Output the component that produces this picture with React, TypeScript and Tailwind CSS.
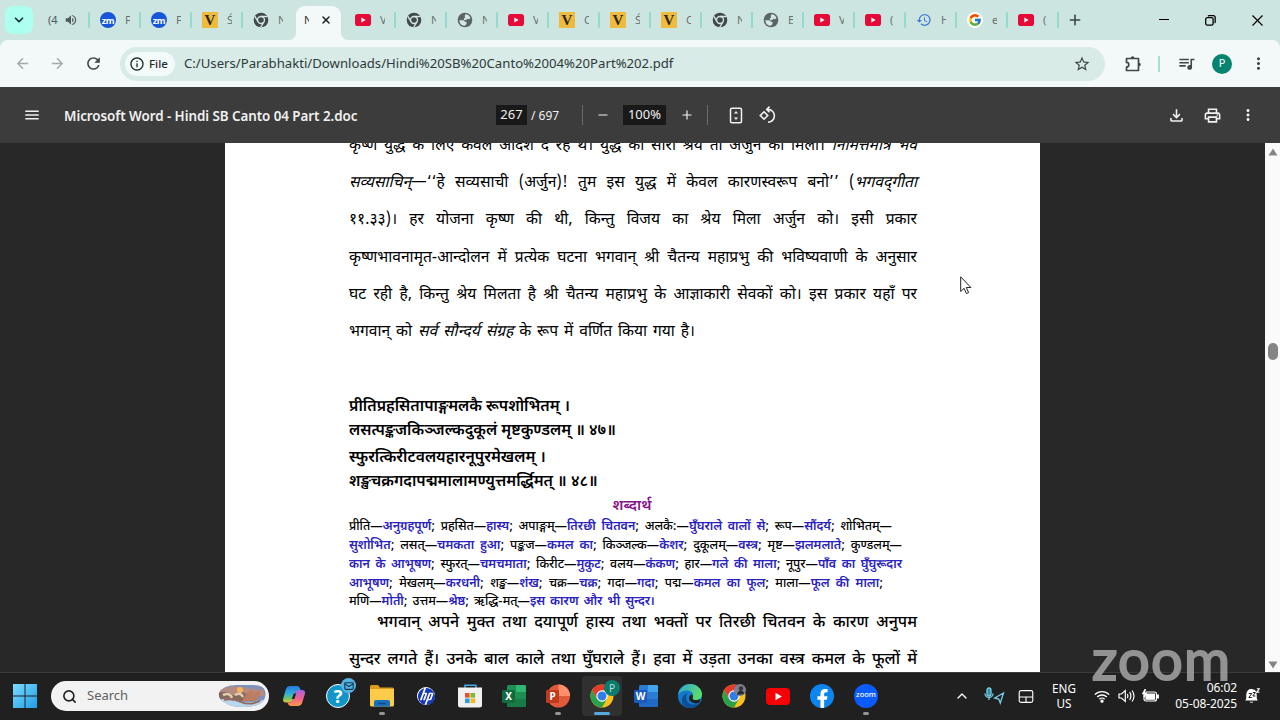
import type { ReactNode } from 'react'
import {
  MdArrowBack,
  MdArrowForward,
  MdRefresh,
  MdStarBorder,
  MdMoreVert,
  MdHistory,
  MdMenu,
  MdOutlinePrint,
  MdOutlineFileDownload,
  MdOutlineInfo,
  MdVolumeUp,
  MdQueueMusic,
} from 'react-icons/md'
import { FcGoogle } from 'react-icons/fc'
import { SiHp } from 'react-icons/si'
import { FaFacebookF } from 'react-icons/fa'
import { ChevronDown, ChevronUp, X, Minus, Plus, Search, Mail } from 'lucide-react'

/* ---------- small logos ---------- */

function YouTube({ className = 'w-4 h-3', fill = '#e60a38' }: { className?: string; fill?: string }) {
  return (
    <svg viewBox="0 0 24 17" className={className} preserveAspectRatio="none">
      <rect width="24" height="17" rx="4" fill={fill} />
      <path d="M9.5 4.8v7.4l6.4-3.7z" fill="#fff" />
    </svg>
  )
}

function ChromeMono() {
  return (
    <svg viewBox="0 0 24 24" className="h-4 w-4">
      <circle cx="12" cy="12" r="11" fill="#42494a" />
      <circle cx="12" cy="12" r="5.2" fill="#42494a" stroke="#d3e7e4" strokeWidth="2" />
      <path d="M12 6.8h10M7.5 14.6 2.6 6.2M16.5 14.6l-4.8 8.2" stroke="#d3e7e4" strokeWidth="2" />
    </svg>
  )
}

function Globe() {
  return (
    <svg viewBox="0 0 16 16" className="h-4 w-4">
      <circle cx="8" cy="8" r="7.3" fill="#5a6465" />
      <path d="M8.500 2.300q3.500.2 5 3.700l-1.500 1.200-2-.4-.8 1.500H7.500L6.600 6.800l1.600-1.300-.6-1.500z" fill="#d3e7e4" />
      <path d="M2.200 8.200h4.300l1.500 1.600 1.500.3v1.800l-1.600 1.900q-4.800 0-5.700-5.600z" fill="#d3e7e4" />
    </svg>
  )
}

function ChromeColor({ className = 'h-6 w-6' }: { className?: string }) {
  return (
    <svg viewBox="0 0 48 48" className={className}>
      <circle cx="24" cy="24" r="23" fill="#fbc116" />
      <path d="M4.1 12.5A23 23 0 0 1 43.9 12.5H24L14 29.7z" fill="#e33b2e" />
      <path d="M4.1 12.5A23 23 0 0 0 24 47L34 29.7 24 35.5l-10-5.8z" fill="#2aa14c" />
      <circle cx="24" cy="24" r="11.4" fill="#fff" />
      <circle cx="24" cy="24" r="9" fill="#2f7de8" />
    </svg>
  )
}

function ZoomFav() {
  return (
    <span className="flex h-4 w-4 items-center justify-center rounded-full bg-[#1656d8] text-[9px] leading-none font-bold tracking-tighter text-white">
      zm
    </span>
  )
}

function Veda() {
  return (
    <span className="flex h-4 w-4 items-center justify-center bg-[#eebb3c] font-['Liberation_Serif',serif] text-[15px] leading-none font-bold text-[#2c2414]">
      V
    </span>
  )
}

type Fav = 'zm' | 'v' | 'chrome' | 'yt' | 'globe' | 'history' | 'google'

const favicons: Record<Fav, ReactNode> = {
  zm: <ZoomFav />,
  v: <Veda />,
  chrome: <ChromeMono />,
  yt: <YouTube />,
  globe: <Globe />,
  history: <MdHistory className="h-4 w-4 text-[#3a7bd5]" />,
  google: (
    <span className="flex h-4 w-4 items-center justify-center rounded-full bg-white">
      <FcGoogle className="h-3.5 w-3.5" />
    </span>
  ),
}

const leftTabs: { icon: Fav; label: string }[] = [
  { icon: 'zm', label: 'F' },
  { icon: 'zm', label: 'F' },
  { icon: 'v', label: 'Ś' },
  { icon: 'chrome', label: 'N' },
]

const rightTabs: { icon: Fav; label: string }[] = [
  { icon: 'yt', label: 'V' },
  { icon: 'chrome', label: 'N' },
  { icon: 'globe', label: 'N' },
  { icon: 'yt', label: 'V' },
  { icon: 'v', label: 'C' },
  { icon: 'v', label: 'Ś' },
  { icon: 'v', label: 'C' },
  { icon: 'chrome', label: 'N' },
  { icon: 'globe', label: 'E' },
  { icon: 'yt', label: 'V' },
  { icon: 'yt', label: '(' },
  { icon: 'history', label: 'H' },
  { icon: 'google', label: 'e' },
  { icon: 'yt', label: '(' },
]

function Tab({ icon, label, last }: { icon: Fav; label: string; last?: boolean }) {
  return (
    <div className="flex h-4 w-[51px] shrink-0 items-center pl-[11px]">
      <span className="flex w-4 justify-center">{favicons[icon]}</span>
      <span className="ml-[9px] w-[5px] overflow-hidden text-[11px] leading-4 text-[#647272]">{label}</span>
      {!last && <span className="ml-auto h-4 w-0.5 translate-x-px rounded bg-[#92dacb]" />}
    </div>
  )
}

function TabStrip() {
  return (
    <div className="flex h-10 items-center bg-[#cde5e1]">
      <button className="ml-[5px] flex h-7 w-7 items-center justify-center rounded-lg bg-[#adfff0] text-[#163334]">
        <ChevronDown className="h-3.5 w-3.5" strokeWidth={3} />
      </button>
      <div className="ml-[5px] flex h-4 w-[51px] shrink-0 items-center pl-2.5 text-[#4c5a5a]">
        <span className="w-[10px] overflow-hidden text-[11px] leading-4">(4</span>
        <MdVolumeUp className="ml-1.5 h-3.5 w-3.5" />
        <span className="ml-auto h-4 w-0.5 translate-x-px rounded bg-[#92dacb]" />
      </div>
      {leftTabs.map((tab, i) => (
        <Tab key={i} {...tab} last={i === leftTabs.length - 1} />
      ))}
      <div className="flex h-10 w-[51px] shrink-0 items-end">
        <svg viewBox="0 0 6 6" className="-ml-1 h-[7px] w-[7px] shrink-0">
          <path d="M6 0v6H0a6 6 0 0 0 6-6" fill="#f3f8f8" />
        </svg>
        <div className="flex h-[34px] w-[45px] shrink-0 items-center rounded-t-[9px] bg-[#f3f8f8] pb-1.5 pl-2">
          <span className="w-[5px] overflow-hidden text-[11px] text-[#2c3535]">N</span>
          <X className="ml-[11px] h-3 w-3 text-[#1c2525]" strokeWidth={3} />
        </div>
        <svg viewBox="0 0 6 6" className="h-[7px] w-[7px] shrink-0">
          <path d="M0 0v6h6a6 6 0 0 1-6-6" fill="#f3f8f8" />
        </svg>
      </div>
      {rightTabs.map((tab, i) => (
        <Tab key={i} {...tab} />
      ))}
      <Plus className="ml-[9px] h-4 w-4 shrink-0 text-[#3a4545]" strokeWidth={2.4} />
      <div className="ml-auto flex items-center pr-[17px] text-black">
        <svg viewBox="0 0 10 10" className="h-2.5 w-2.5" stroke="currentColor">
          <path d="M0 4.5h10" />
        </svg>
        <svg viewBox="0 0 11 11" className="ml-9 h-[11px] w-[11px]" fill="none" stroke="currentColor" strokeWidth="1.3">
          <rect x=".7" y="2.7" width="7.4" height="7.4" rx="1.6" />
          <path d="M3 1.2A1.5 1.5 0 0 1 4 .7h4.2a2 2 0 0 1 2 2v4.1q0 .8-.6 1.2" />
        </svg>
        <svg viewBox="0 0 11 11" className="ml-9 h-[11px] w-[11px]" stroke="currentColor" strokeWidth="1.2">
          <path d="m.5.5 10 10m0-10-10 10" />
        </svg>
      </div>
    </div>
  )
}

function AddressBar() {
  return (
    <div className="bg-[#cde5e1]">
      <div className="flex h-[47px] items-center rounded-t-lg bg-[#f3f8f8] text-[#3f4848]">
        <MdArrowBack className="ml-3.5 h-[17px] w-[17px] text-[#a3aaab]" />
        <MdArrowForward className="ml-[18px] h-[17px] w-[17px] text-[#a3aaab]" />
        <MdRefresh className="ml-[18px] h-[19px] w-[19px]" />
        <div className="ml-[17px] flex h-[34px] w-[985px] items-center rounded-full bg-[#d8ebe7] pr-3.5 pl-[5px]">
          <span className="flex h-6 w-[50px] items-center rounded-full bg-[#f3fbfa] pl-1 text-[11.5px] font-medium text-[#1f2a2a]">
            <MdOutlineInfo className="h-4 w-4 rotate-180 -scale-y-100" />
            <span className="ml-1">File</span>
          </span>
          <span className="ml-[9px] text-[13.17px] whitespace-nowrap text-[#2f3a3a]">
            C:/Users/Parabhakti/Downloads/Hindi%20SB%20Canto%2004%20Part%202.pdf
          </span>
          <MdStarBorder className="ml-auto h-[18px] w-[18px]" />
        </div>
        <svg viewBox="0 0 18 18" className="ml-[19px] h-[18px] w-[18px]" fill="none" stroke="currentColor" strokeWidth="1.7">
          <path d="M2.5 3.5h12v12h-12V12a2.3 2.3 0 0 0 0-4.6z" strokeLinejoin="round" />
          <path d="M6.8 3a1.8 1.8 0 0 1 3.6 0zM15 7.700a1.800 1.800 0 0 1 0 3.600z" fill="currentColor" stroke="none" />
        </svg>
        <span className="ml-4 h-4 w-0.5 bg-[#a8dfd4]" />
        <MdQueueMusic className="ml-[17px] h-[19px] w-[19px]" />
        <span className="ml-4 flex h-5 w-5 items-center justify-center rounded-full bg-[#07846f] text-[11px] text-white">
          P
        </span>
        <MdMoreVert className="ml-[17px] h-[19px] w-[19px]" />
      </div>
    </div>
  )
}

function PdfToolbar() {
  return (
    <div className="flex h-14 items-center bg-[#3c3c3c] text-[#f1f1f1]">
      <MdMenu className="ml-[23px] h-[18px] w-[18px]" />
      <span className="ml-[23px] w-[432px] pt-0.5 text-[13.4px] font-semibold tracking-[-0.05px] whitespace-nowrap">
        Microsoft Word - Hindi SB Canto 04 Part 2.doc
      </span>
      <div className="flex items-center text-[13px]">
        <span className="flex h-5 w-[31px] items-center justify-center bg-[#191919]">267</span>
        <span className="ml-1 w-[31px] pt-px text-xs whitespace-nowrap">/ 697</span>
        <span className="ml-5 h-5 w-px bg-[#6b6b6b]" />
        <Minus className="ml-[13px] h-3.5 w-3.5" />
        <span className="ml-[13px] flex h-5 w-[43px] items-center justify-center bg-[#191919]">100%</span>
        <Plus className="ml-[14px] h-3.5 w-3.5" />
        <span className="ml-[13px] h-5 w-px bg-[#6b6b6b]" />
        <svg viewBox="0 0 14 18" className="ml-[21px] h-[17px] w-[14px]" fill="none" stroke="currentColor" strokeWidth="1.6">
          <rect x="1.2" y="1.2" width="11.6" height="15.6" rx="1.4" />
          <path d="M7 4.200 9.200 7H4.800zM7 13.800 9.200 11H4.800z" fill="currentColor" stroke="none" />
        </svg>
        <svg viewBox="0 0 18 18" className="ml-4 h-[18px] w-[18px]" fill="none" stroke="currentColor" strokeWidth="1.6">
          <path d="m5 5.800 3.700 3.700L5 13.200 1.300 9.500z" />
          <path d="M9 16.200a6.400 6.400 0 1 0 0-12.800H7.700M10.500.700 7.700 3.400l2.800 2.800" />
        </svg>
      </div>
      <MdOutlineFileDownload className="ml-auto h-[19px] w-[19px]" />
      <MdOutlinePrint className="ml-[17px] h-[19px] w-[19px]" />
      <MdMoreVert className="mr-[23px] ml-[17px] h-[18px] w-[18px]" />
    </div>
  )
}

/* ---------- document ---------- */

// One printed line, stretched over the text column
function Justified({ children, width = 'w-[568px]', className = '' }: { children: ReactNode; width?: string; className?: string }) {
  return (
    <div className={`h-[37.2px] shrink-0 text-justify whitespace-nowrap [text-align-last:justify] ${width} ${className}`}>
      {children}
    </div>
  )
}

type Gloss = [word: string, meaning: string, tail?: string]

const glossary: { width: string; items: Gloss[] }[] = [
  {
    width: 'w-[543px]',
    items: [['प्रीति', 'अनुग्रहपूर्ण'], ['प्रहसित', 'हास्य'], ['अपाङ्गम्', 'तिरछी चितवन'], ['अलकै:', 'घुँघराले वालों से'], ['रूप', 'सौंदर्य'], ['शोभितम्', '', '']],
  },
  {
    width: 'w-[553px]',
    items: [['', 'सुशोभित'], ['लसत्', 'चमकता हुआ'], ['पङ्कज', 'कमल का'], ['किञ्जल्क', 'केशर'], ['दुकूलम्', 'वस्त्र'], ['मृष्ट', 'झलमलाते'], ['कुण्डलम्', '', '']],
  },
  {
    width: 'w-[553px]',
    items: [['', 'कान के आभूषण'], ['स्फुरत्', 'चमचमाता'], ['किरीट', 'मुकुट'], ['वलय', 'कंकण'], ['हार', 'गले की माला'], ['नूपुर', 'पाँव का घुँघुरूदार', '']],
  },
  {
    width: 'w-[534px]',
    items: [['', 'आभूषण'], ['मेखलम्', 'करधनी'], ['शङ्ख', 'शंख'], ['चक्र', 'चक्र'], ['गदा', 'गदा'], ['पद्म', 'कमल का फूल'], ['माला', 'फूल की माला']],
  },
  {
    width: 'w-[306px]',
    items: [['मणि', 'मोती'], ['उत्तम', 'श्रेष्ठ'], ['ऋद्धि-मत्', 'इस कारण और भी सुन्दर।', '']],
  },
]

function Page() {
  return (
    <div className="w-[815px] overflow-hidden bg-white pl-[124px] font-['Noto_Sans_Devanagari','Noto_Sans','Lohit_Devanagari',sans-serif] text-black">
      <div className="-mt-[15px] flex flex-col text-[15.6px] leading-[37.2px]">
        <Justified>
          कृष्ण युद्ध के लिए केवल आदेश दे रहे थे। युद्ध का सारा श्रेय तो अर्जुन को मिला। <i>निमित्तमात्रं भव</i>
        </Justified>
        <Justified>
          <i>सव्यसाचिन्</i>—‘‘हे सव्यसाची (अर्जुन)! तुम इस युद्ध में केवल कारणस्वरूप बनो’’ (<i>भगवद्‌गीता</i>
        </Justified>
        <Justified>११.३३)। हर योजना कृष्ण की थी, किन्तु विजय का श्रेय मिला अर्जुन को। इसी प्रकार</Justified>
        <Justified>कृष्णभावनामृत-आन्दोलन में प्रत्येक घटना भगवान् श्री चैतन्य महाप्रभु की भविष्यवाणी के अनुसार</Justified>
        <Justified>घट रही है, किन्तु श्रेय मिलता है श्री चैतन्य महाप्रभु के आज्ञाकारी सेवकों को। इस प्रकार यहाँ पर</Justified>
        <Justified width="w-[346px]">
          भगवान् को <i>सर्व सौन्दर्य संग्रह</i> के रूप में वर्णित किया गया है।
        </Justified>
      </div>

      <div className="mt-11 flex flex-col text-[15.7px] leading-6 font-semibold whitespace-nowrap">
        <p>प्रीतिप्रहसितापाङ्गमलकै रूपशोभितम् ।</p>
        <p>लसत्पङ्कजकिञ्जल्कदुकूलं मृष्टकुण्डलम् ॥ ४७॥</p>
        <p className="mt-[3px]">स्फुरत्किरीटवलयहारनूपुरमेखलम् ।</p>
        <p>शङ्खचक्रगदापद्ममालामण्युत्तमर्द्धिमत् ॥ ४८॥</p>
      </div>

      <h2 className="mt-px w-[566px] text-center text-[15px] leading-6 font-semibold text-[#85148a]">शब्दार्थ</h2>

      <div className="-mt-px text-[12.4px] leading-[18.8px] font-medium whitespace-nowrap">
        {glossary.map(({ width, items }, i) => (
          <div key={i} className={`h-[18.8px] [text-align-last:justify] ${width}`}>
            {items.map(([word, meaning, tail = '; '], j) => (
              <span key={j}>
                {word && `${word}—`}
                <span className="font-semibold text-[#2a22c0]">{meaning}</span>
                {tail}
              </span>
            ))}
          </div>
        ))}
      </div>

      <div className="flex flex-col text-base leading-[37.2px] font-medium">
        <Justified className="-mt-[7px] pl-7">भगवान् अपने मुक्त तथा दयापूर्ण हास्य तथा भक्तों पर तिरछी चितवन के कारण अनुपम</Justified>
        <Justified>सुन्दर लगते हैं। उनके बाल काले तथा घुँघराले हैं। हवा में उड़ता उनका वस्त्र कमल के फूलों में</Justified>
      </div>
    </div>
  )
}

function Scrollbar() {
  return (
    <div className="ml-auto flex w-[15px] flex-col items-center bg-[#fafafa]">
      <svg viewBox="0 0 10 8" className="mt-[5px] h-2 w-2.5">
        <path d="M5 0.500 9.500 7.500H.5z" fill="#858585" />
      </svg>
      <span className="mt-[187px] h-[17px] w-2.5 rounded-full bg-[#858585]" />
      <svg viewBox="0 0 10 8" className="mt-auto mb-[3px] h-2 w-2.5">
        <path d="M5 7.500 9.500.5H.5z" fill="#858585" />
      </svg>
    </div>
  )
}

function Viewer() {
  return (
    <div className="relative flex h-[529px] overflow-hidden bg-[#282828] pl-[225px]">
      <Page />
      <Scrollbar />
      <svg viewBox="0 0 12 19" className="absolute top-[133px] left-[960px] h-[19px] w-3">
        <path d="M.7.800v14.700l3.400-3.200 2.300 5.300 2.200-1-2.300-5.100h4.600z" fill="#fff" stroke="#222" strokeWidth="1" />
      </svg>
    </div>
  )
}

/* ---------- taskbar ---------- */

function OfficeApp({ letter, round, tones }: { letter: string; round?: boolean; tones: [string, string, string] }) {
  const [light, mid, dark] = tones
  return (
    <div className="relative h-6 w-6">
      <svg viewBox="0 0 24 24" className="h-6 w-6">
        {round ? (
          <>
            <circle cx="12.500" cy="12" r="11.500" fill={mid} />
            <path d="M12.500.5A11.500 11.500 0 0 1 24 12H12.500z" fill={light} />
          </>
        ) : (
          <>
            <rect x="5" y="1" width="19" height="22" rx="1.500" fill={mid} />
            <path d="M14 1h8.500A1.500 1.500 0 0 1 24 2.500V8H14z" fill={light} />
            <path d="M5 15h19v6.500a1.500 1.500 0 0 1-1.500 1.500h-16A1.500 1.500 0 0 1 5 21.500z" fill={dark} opacity=".55" />
          </>
        )}
        <rect x="0" y="6" width="13" height="13" rx="1.200" fill={dark} />
      </svg>
      <span className="absolute top-[6px] left-0 w-[13px] text-center text-[10px] leading-[13px] font-bold text-white">
        {letter}
      </span>
    </div>
  )
}

function Copilot() {
  return (
    <svg viewBox="0 0 24 24" className="h-6 w-6">
      <defs>
        <linearGradient id="cpA" x1="0" y1="0" x2="0" y2="1">
          <stop offset="0" stopColor="#2878e0" />
          <stop offset=".45" stopColor="#2ab0dc" />
          <stop offset=".75" stopColor="#6cc46a" />
          <stop offset="1" stopColor="#e8c63a" />
        </linearGradient>
        <linearGradient id="cpB" x1="0" y1="0" x2="0" y2="1">
          <stop offset="0" stopColor="#a862e8" />
          <stop offset=".55" stopColor="#f0628a" />
          <stop offset="1" stopColor="#ff9a4a" />
        </linearGradient>
      </defs>
      <path d="M7.500 2H15q2.200 0 2.900 2l.8 2.600h-2.600q-2.200 0-2.900 2.200l-2 6.700q-.9 3-3.400 3H4Q.3 18.500 1.200 14.500L4 4.700Q4.900 2 7.500 2z" fill="url(#cpA)" />
      <path d="M16.500 22H9q-2.200 0-2.900-2l-.5-1.500h2.300q2.300 0 3.100-2.700l2-6.700q.9-3.100 3.300-3.100H20q3.700 0 2.900 4L20 19.300Q19.100 22 16.500 22z" fill="url(#cpB)" />
      <path d="M11.700 9.500h2.500l-1.900 5.500H9.800z" fill="#202020" />
    </svg>
  )
}

function Help() {
  return (
    <div className="relative flex h-6 w-6 items-center justify-center rounded-full border-[1.5px] border-white bg-[#1295c9] text-lg leading-none font-bold text-white">
      ?
      <span className="absolute -top-[7px] -right-[7px] flex h-[15px] w-[15px] items-center justify-center rounded-full bg-[#54b4e4] text-[#16354a]">
        <Mail className="h-2.5 w-2.5" strokeWidth={2.6} />
      </span>
    </div>
  )
}

function Explorer() {
  return (
    <svg viewBox="0 0 24 24" className="h-6 w-6">
      <path d="M0 2.500Q0 1 1.500 1H8l2 2.500h12.500Q24 3.500 24 5v3H0z" fill="#dd9a1f" />
      <path d="M0 5h24v16q0 1.500-1.500 1.500h-21Q0 22.500 0 21z" fill="#fbcb49" />
      <path d="M4 22.500V18q0-2 2-2h12q2 0 2 2v4.500z" fill="#1770bd" />
      <path d="M8 19.500h8" stroke="#0c4d86" strokeWidth="1.500" />
    </svg>
  )
}

function Store() {
  return (
    <svg viewBox="0 0 24 24" className="h-6 w-6">
      <path d="M7 4V1.200h11V4" fill="none" stroke="#41a9e6" strokeWidth="1.500" />
      <path d="M0 3.500h24V21q0 2.500-2.500 2.500h-19Q0 23.500 0 21z" fill="#f0f0f0" />
      <path d="M7 9h4.600v4.600H7z" fill="#e8502f" />
      <path d="M12.500 9h4.600v4.600h-4.600z" fill="#7db92c" />
      <path d="M7 14.500h4.600v4.600H7z" fill="#2b9fe0" />
      <path d="M12.500 14.500h4.600v4.600h-4.600z" fill="#fbb81e" />
    </svg>
  )
}

function Edge() {
  return (
    <svg viewBox="0 0 24 24" className="h-6 w-6">
      <defs>
        <linearGradient id="edgeTop" x1="0" y1="0" x2="1" y2=".4">
          <stop offset="0" stopColor="#2aa5e0" />
          <stop offset="1" stopColor="#5bdc6a" />
        </linearGradient>
      </defs>
      <circle cx="12" cy="12" r="12" fill="#1578c8" />
      <path d="M.2 10.500C1 4.500 6 0 12 0c7 0 12 5 12 10.200 0 3.800-3 5.800-6 5.800-2.500 0-4-.8-4-1.800 0-.7 1-1.200 1-3C15 8.500 12.300 6.500 9 6.500c-4.500 0-7.500 2-8.800 4z" fill="url(#edgeTop)" />
      <path d="M8 13c0 6 5.500 9.500 13 6.500-2 3-5.500 4.500-9 4.500C6 24 1.500 18.500 5 12.500 6 10.500 8 9.500 10 9.200 8.500 10 8 11.500 8 13z" fill="#0d4f96" />
      <path d="M14.600 14.900q3.400 2.300 7.700.200l-.7 3.300q-5 2.500-9.500-1.400-2.600-3 1-6.600 1.800 0 1.900 1.400z" fill="#202020" />
    </svg>
  )
}

function TaskIcon({ children, active, running }: { children: ReactNode; active?: boolean; running?: boolean }) {
  return (
    <div className={`relative flex h-10 w-10 shrink-0 items-center justify-center rounded ${active ? 'bg-[#303030]' : ''}`}>
      {children}
      {active && <span className="absolute bottom-px h-[3px] w-4 rounded-full bg-[#55a9dc]" />}
      {running && <span className="absolute bottom-px h-[3px] w-1.5 rounded-full bg-[#959595]" />}
    </div>
  )
}

function SearchArt() {
  return (
    <svg viewBox="0 0 48 22" className="h-[22px] w-12">
      <defs>
        <clipPath id="artClip">
          <path d="M1 8Q5 0 19 0h16q11 0 12 6 2 7-4 12-4 4-18 4-13 0-17-4Q0 15 1 8z" />
        </clipPath>
      </defs>
      <g clipPath="url(#artClip)">
        <path d="M0 0h48v22H0z" fill="#8291b8" />
        <path d="M0 6q10-6 22-4t24 3v6H0z" fill="#b58b82" />
        <circle cx="22" cy="5" r="3" fill="#f5b45a" />
        <path d="M0 8q8-3 13 1t12-2l8 5-9 4-24-2z" fill="#86685c" />
        <path d="M25 14Q32 3 36 6q-3 5-4 7 6-7 10-7 1 5-5 10H25z" fill="#bb7c60" />
        <path d="M5 10q7-3 9 3m3-3q6-3 8 2" stroke="#ddcfae" strokeWidth="2.500" fill="none" />
        <path d="M0 15q12-3 22 1t26-2v8H0z" fill="#b8d7ec" />
        <path d="M6 15q9-2 17 2t19-1" stroke="#93685b" strokeWidth="1.600" fill="none" />
      </g>
    </svg>
  )
}

function Taskbar() {
  return (
    <div className="flex h-12 items-center border-t border-[#3b3b3b] bg-[#202020] pb-px text-white">
      <svg viewBox="0 0 24 24" className="ml-[13px] h-6 w-6">
        <defs>
          <linearGradient id="win" x1="0" y1="0" x2="1" y2="1">
            <stop offset="0" stopColor="#7bdcff" />
            <stop offset="1" stopColor="#1f9ce8" />
          </linearGradient>
        </defs>
        <path d="M0 0h11.500v11.500H0zM12.500 0H24v11.500H12.500zM0 12.500h11.500V24H0zM12.500 12.500H24V24H12.500z" fill="url(#win)" />
      </svg>
      <div className="ml-3.5 flex h-[30px] w-[218px] items-center rounded-full bg-[#f2f2f2] pr-[3px] pl-[11px]">
        <Search className="h-[15px] w-[15px] text-[#222]" strokeWidth={2.6} />
        <span className="ml-[10px] text-[13px] text-[#606060]">Search</span>
        <span className="ml-auto">
          <SearchArt />
        </span>
      </div>
      <div className="ml-[5px] flex items-center gap-1">
        <TaskIcon><Copilot /></TaskIcon>
        <TaskIcon><Help /></TaskIcon>
        <TaskIcon running><Explorer /></TaskIcon>
        <TaskIcon>
          <span className="flex h-[18px] w-[18px] items-center justify-center rounded-full bg-white">
            <SiHp className="h-[17px] w-[17px] text-[#1539b8]" />
          </span>
        </TaskIcon>
        <TaskIcon><Store /></TaskIcon>
        <TaskIcon><OfficeApp letter="X" tones={['#31b573', '#1d8f51', '#126b3c']} /></TaskIcon>
        <TaskIcon running><OfficeApp letter="P" round tones={['#ff8f6b', '#e2593a', '#bf3b1e']} /></TaskIcon>
        <TaskIcon active>
          <ChromeColor />
          <span className="absolute top-1 right-[2px] flex h-4 w-4 items-center justify-center rounded-full bg-[#0b7b6b] text-[10px] text-[#b9ddd6]">P</span>
        </TaskIcon>
        <TaskIcon><OfficeApp letter="W" tones={['#41a5ee', '#2b7cd3', '#185abd']} /></TaskIcon>
        <TaskIcon><Edge /></TaskIcon>
        <TaskIcon>
          <ChromeColor />
          <svg viewBox="0 0 12 12" className="absolute top-2 right-2 h-3 w-3">
            <circle cx="6" cy="6" r="6" fill="#7b8191" />
            <circle cx="7" cy="4.500" r="2.200" fill="#3a3436" />
            <path d="M3 11q1-5 4-4.500 3 .5 3 3.500z" fill="#272930" />
          </svg>
        </TaskIcon>
        <TaskIcon><YouTube className="h-[17px] w-6" fill="#f60206" /></TaskIcon>
        <TaskIcon>
          <span className="flex h-6 w-6 items-end justify-center overflow-hidden rounded-full bg-[#0c86ee]">
            <FaFacebookF className="h-[19px] w-[19px]" />
          </span>
        </TaskIcon>
        <TaskIcon running>
          <span className="flex h-6 w-6 items-center justify-center rounded-full bg-[#0b5cff] pb-0.5 text-[7.5px] leading-none font-medium">zoom</span>
        </TaskIcon>
      </div>

      <div className="ml-auto flex items-center">
        <ChevronUp className="h-4 w-4" />
        <svg viewBox="0 0 21 18" className="ml-[14px] h-[18px] w-[21px]" fill="none" stroke="#79cfe6" strokeWidth="1.300">
          <rect x="3" y="1" width="4" height="8" rx="2" fill="#2c8fa8" />
          <path d="M1 6.500a4 4 0 0 0 8 0M5 10.500V13M19.500 6l-8.800 5 4 1 1.600 4z" />
        </svg>
        <svg viewBox="0 0 16 14" className="ml-[13px] h-[13px] w-4" fill="none" stroke="currentColor" strokeWidth="1.200">
          <rect x=".7" y=".7" width="14.600" height="12.600" rx="2" />
          <path d="M.7 7.500h14.600M8 7.500v5.800" />
        </svg>
        <div className="ml-[14px] w-8 text-center text-[11.700px] leading-[15px]">
          ENG
          <br />
          US
        </div>
        <svg viewBox="0 0 16 13" className="ml-[14px] h-[13px] w-4" fill="none" stroke="currentColor" strokeWidth="1.300">
          <path d="M.8 4.600a10.200 10.200 0 0 1 14.400 0M3.200 7a6.800 6.800 0 0 1 9.600 0M5.400 9.200a3.700 3.700 0 0 1 5.200 0" />
          <circle cx="8" cy="11.200" r="1" fill="currentColor" />
        </svg>
        <svg viewBox="0 0 17 14" className="ml-2 h-3.5 w-[17px]" fill="none" stroke="currentColor" strokeWidth="1.200">
          <path d="M1 5h2.500L7.300 1.500v11L3.500 9H1zM9.300 5q1.200 2 0 4M11.600 3.200q2.600 3.800 0 7.600M14 1.500q4 5.500 0 11" />
        </svg>
        <svg viewBox="0 0 17 14" className="ml-[7px] h-3.5 w-[17px]" fill="none" stroke="currentColor" strokeWidth="1.200">
          <rect x="2" y="3" width="12.500" height="9" rx="2" />
          <path d="M4 5h8.500v5.200H4zM15 6h1.300v3H15z" fill="currentColor" />
          <path d="M3.500 0 1 4.500h3L2 8" stroke="#fff" strokeWidth="1.600" />
        </svg>
        <div className="ml-[14px] w-[64px] text-right text-xs leading-4 tracking-[-0.1px] whitespace-nowrap">
          06:02
          <br />
          05-08-2025
        </div>
        <svg viewBox="0 0 15 16" className="mr-5 ml-2 h-4 w-[15px]">
          <path d="M6.500 1a5 5 0 0 0-5 5v4L.3 12.500h12.400L11.500 10V7M4.500 13.700a2.300 2.300 0 0 0 4 0z" fill="#fff" />
          <path d="M6 1q3.500-.5 5.500 2.800v8H1.500v-5Q1.500 2 6 1z" fill="#fff" />
          <path d="M3.800 5.500h3l-3 4h3M7.800 4.500h2.600L7.800 8h2.600" fill="none" stroke="#202020" strokeWidth="1" />
          <path d="M11.800.7h2.600l-2.600 3.400h2.600" fill="none" stroke="#fff" strokeWidth="1.100" />
        </svg>
      </div>
    </div>
  )
}

export default function App() {
  return (
    <div className="relative h-[720px] w-[1280px] overflow-hidden font-['Noto_Sans',sans-serif]">
      <TabStrip />
      <AddressBar />
      <PdfToolbar />
      <Viewer />
      <Taskbar />
      {/* watermark over the shared screen */}
      <div className="absolute top-[625px] left-[1092px] font-['Lato',sans-serif] text-[56px] leading-[68px] tracking-[1.2px] text-[#a6a6a6] opacity-85 [-webkit-text-stroke:2px_#a6a6a6]">
        zoom
      </div>
    </div>
  )
}
